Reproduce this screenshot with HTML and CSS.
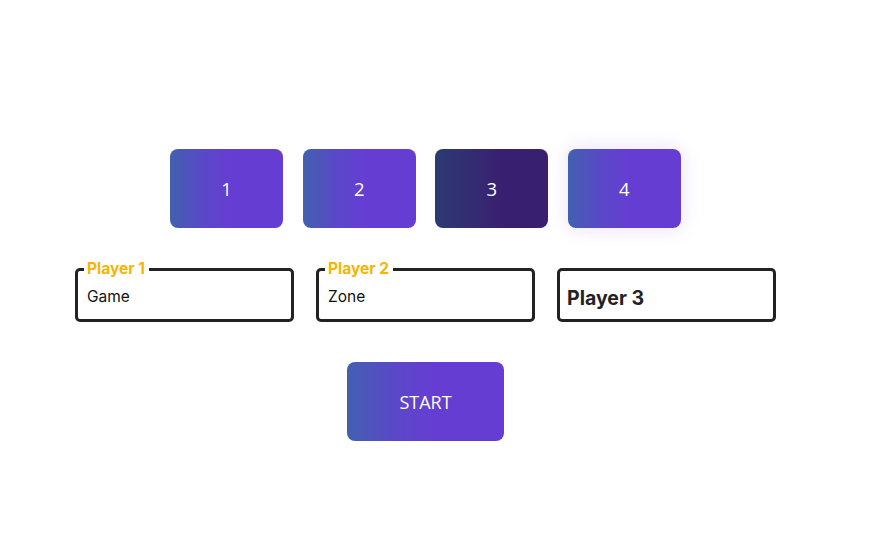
FILE: index.html
```html
<!DOCTYPE html>
<html>
<head>
<meta charset="utf-8">
<link rel="stylesheet" href="styles.css">
</head>
<body>
<main class="page">
  <div class="choices">
    <button class="choice">1</button>
    <button class="choice">2</button>
    <button class="choice dark">3</button>
    <button class="choice glow">4</button>
  </div>
  <div class="players">
    <div class="field">
      <span class="legend">Player 1</span>
      <span class="value">Game</span>
    </div>
    <div class="field">
      <span class="legend">Player 2</span>
      <span class="value">Zone</span>
    </div>
    <div class="field">
      <span class="value strong">Player 3</span>
    </div>
  </div>
  <button class="choice start">START</button>
</main>
</body>
</html>
```
FILE: styles.css
```css
html, body {
  margin: 0;
  background: #fff;
}
.page {
  width: 851px;
  padding-top: 149px;
  display: flex;
  flex-direction: column;
  align-items: center;
  gap: 40px;
}
.choices {
  display: flex;
  gap: 19.6px;
}
.choice {
  width: 113px;
  height: 79px;
  border: none;
  border-radius: 8px;
  background: linear-gradient(90deg, #4260b0 0%, #5a48c8 30%, #663dd3 55%, #663dd3 100%);
  color: #fff;
  font-family: "Open Sans", sans-serif;
  font-size: 18.5px;
  padding: 0;
}
.choice.dark {
  background: linear-gradient(90deg, #2b3a72 0%, #352b72 35%, #391f70 60%, #391f70 100%);
}
.choice.glow {
  box-shadow: 0 0 18px 2px rgba(110, 70, 220, 0.14);
}
.choice.start {
  width: 157px;
  font-size: 18px;
}
.players {
  display: flex;
  gap: 22px;
}
.field {
  position: relative;
  box-sizing: border-box;
  width: 219px;
  height: 54px;
  border: 3px solid #222;
  border-radius: 5px;
  display: flex;
  align-items: center;
  padding: 3px 9px 0;
}
.legend {
  position: absolute;
  top: -12px;
  left: 6px;
  padding: 0 4px 0 3px;
  background: #fff;
  color: #f7b500;
  font-family: Inter, sans-serif;
  font-weight: 700;
  font-size: 15.5px;
  line-height: 19px;
}
.value {
  font-family: Inter, sans-serif;
  font-size: 15.5px;
  color: #111;
}
.value.strong {
  font-weight: 700;
  font-size: 19.5px;
  color: #222;
  margin-left: -2px;
  padding-top: 2px;
}
```
